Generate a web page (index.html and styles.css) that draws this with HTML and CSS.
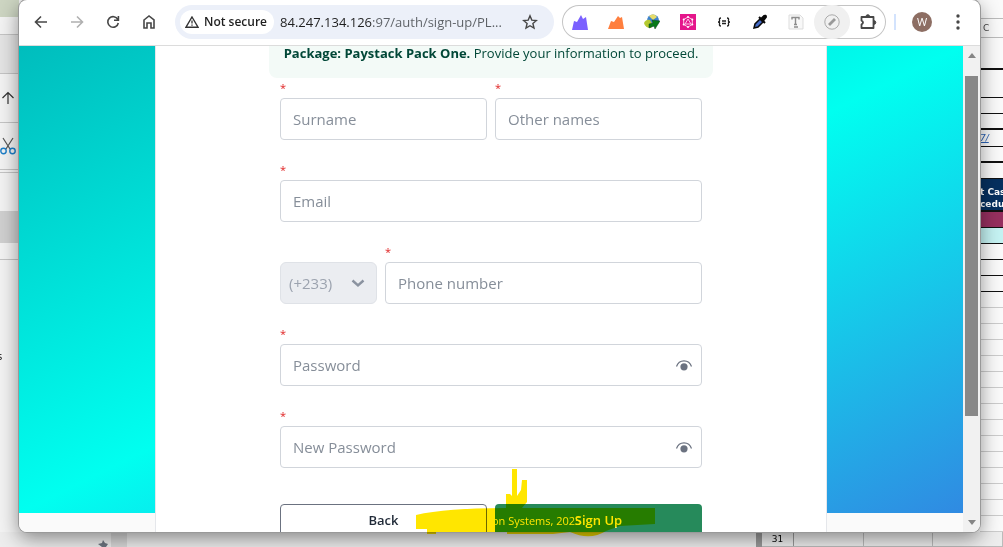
FILE: index.html
```html
<!DOCTYPE html>
<html lang="en">
<head>
<meta charset="utf-8">
<title>Sign up</title>
<link rel="stylesheet" href="styles.css">
</head>
<body>
<div class="desktop">
  <aside class="left-app">
    <div class="la la-photo"></div>
    <div class="la la-title"></div>
    <div class="la la-tab"></div>
    <div class="la la-tool"><svg width="14" height="14" viewBox="0 0 14 14"><path d="M7 13V1.500M1.500 7 7 1.500 12.500 7" fill="none" stroke="#333" stroke-width="1.200"/></svg></div>
    <div class="la la-cut"><svg width="16" height="18" viewBox="0 0 16 18"><path d="M3 1l7 11M13 1 6 12" fill="none" stroke="#555" stroke-width="1.200"/><circle cx="3.500" cy="14" r="2.700" fill="none" stroke="#1e7fc8" stroke-width="1.400"/><circle cx="12.500" cy="14" r="2.700" fill="none" stroke="#1e7fc8" stroke-width="1.400"/></svg></div>
    <div class="la la-line"></div>
    <div class="la la-space"></div>
    <div class="la la-selected"></div>
    <div class="la la-gap"></div>
    <div class="la la-text">s</div>
  </aside>

  <main class="window">
    <header class="toolbar">
      <nav class="nav">
        <button class="tool" aria-label="Back"><svg width="14" height="14" viewBox="0 0 14 14"><path d="M13 7H1.500M7 1.500 1.500 7 7 12.500" fill="none" stroke="#474747" stroke-width="1.600"/></svg></button>
        <button class="tool" aria-label="Forward" disabled><svg width="14" height="14" viewBox="0 0 14 14"><path d="M1 7h11.500M7 1.500 12.500 7 7 12.500" fill="none" stroke="#b0b0b0" stroke-width="1.600"/></svg></button>
        <button class="tool" aria-label="Reload"><svg width="14" height="14" viewBox="0 0 14 14"><path d="M11.800 4.500A5.300 5.300 0 1 0 12.300 8M12.400 1v4.300H8" fill="none" stroke="#474747" stroke-width="1.600"/></svg></button>
        <button class="tool" aria-label="Home"><svg width="14" height="16" viewBox="0 0 14 16"><path d="M2 6 7 2l5 4v8H9V9H5v5H2z" fill="none" stroke="#474747" stroke-width="1.600"/></svg></button>
      </nav>
      <div class="omnibox">
        <button class="secure"><svg width="14" height="12" viewBox="0 0 14 12"><path d="M7 1 13 11.200H1z" fill="none" stroke="#333" stroke-width="1.400"/><path d="M7 4.500v3M7 8.500v1.200" stroke="#333" stroke-width="1.300"/></svg><span>Not secure</span></button>
        <input class="url" aria-label="Address" value="84.247.134.126:97/auth/sign-up/PL...">
        <button class="star" aria-label="Bookmark"><svg width="16" height="16" viewBox="0 0 16 16"><path d="m8 1.800 1.800 4.300 4.600.4-3.500 3 1.100 4.600L8 11.700l-4 2.400 1.100-4.600-3.500-3 4.600-.4z" fill="none" stroke="#474747" stroke-width="1.400"/></svg></button>
      </div>
      <div class="extensions">
        <button class="tool" aria-label="Purple extension"><svg width="16" height="16" viewBox="0 0 16 16"><path d="M0 16 2 7l3 1 4-7 2 4 3-2 2 13z" fill="#7b61ff"/></svg></button>
        <button class="tool" aria-label="Orange extension"><svg width="16" height="16" viewBox="0 0 16 16"><path d="M0 15 3 7l3 1 4-6 2 2 2-1 2 12z" fill="#ff7f3e"/></svg></button>
        <button class="tool" aria-label="Download manager"><svg width="16" height="16" viewBox="0 0 16 16"><circle cx="9" cy="6.500" r="6" fill="#3d82cf"/><path d="M5 2q5-4 8 1L9 6z" fill="#e6dc6a"/><path d="M0 9q2-4 6-3l3 5-2 3q-6 0-7-5" fill="#b4c92f"/><path d="m5 10 4-1-1-3 8 1-5 8-1-3-5 2z" fill="#087a18" stroke="#174722" stroke-width=".5"/></svg></button>
        <button class="tool" aria-label="GraphQL extension"><svg width="16" height="16" viewBox="0 0 16 16"><path fill="#e5168b" d="M0 0h16v16H0z"/><path d="m8 3 4.300 2.500v5L8 13l-4.300-2.500v-5zM8 5l3 5H5z" fill="none" stroke="#ffc1e5" stroke-width="1"/><g fill="#fff"><circle cx="8" cy="3" r="1"/><circle cx="12.300" cy="5.500" r="1"/><circle cx="12.300" cy="10.500" r="1"/><circle cx="8" cy="13" r="1"/><circle cx="3.700" cy="10.500" r="1"/><circle cx="3.700" cy="5.500" r="1"/></g></svg></button>
        <button class="tool" aria-label="JSON extension"><svg width="14" height="10" viewBox="0 0 14 10"><path d="M4 1Q2 1 2.500 3T1 5q2 0 1.500 2T4 9M10 1q2 0 1.500 2T13 5q-2 0-1.500 2T10 9M5 4h4M5 6.500h4" fill="none" stroke="#222" stroke-width="1.300"/></svg></button>
        <button class="tool" aria-label="Color picker"><svg width="16" height="16" viewBox="0 0 16 16"><path d="m2 14 1-4 5-5 3 3-5 5z" fill="#446bc8" stroke="#080808" stroke-width="1.500"/><path d="m7 3 6 6M9 5l3-3q2-1 2 1l-3 4z" fill="#080808" stroke="#080808" stroke-width="2"/></svg></button>
        <button class="tool" aria-label="Text extension"><svg width="16" height="16" viewBox="0 0 16 16"><path d="M1 1h11l3 3v11H1z" fill="#f8f8f8" stroke="#ddd"/><path d="M4 5.500V3.500h7v2M7.500 4v6.500M6 10.500h3M6 13h4" fill="none" stroke="#8c8c8c" stroke-width="1.400"/></svg></button>
        <button class="tool active" aria-label="Pen extension"><svg width="16" height="16" viewBox="0 0 16 16"><circle cx="8" cy="8" r="7.200" fill="none" stroke="#aaa" stroke-width="1"/><path d="m5 11 6-6" stroke="#999" stroke-width="2.800"/></svg></button>
        <button class="tool" aria-label="Extensions"><svg width="18" height="18" viewBox="0 0 18 18"><path d="M2.500 4h12v11h-12v-3.500q3-2 0-4z" fill="none" stroke="#474747" stroke-width="1.800" stroke-linejoin="round"/><path d="M7 3.500a1.800 1.800 0 0 1 3.600 0zM15 7.700a1.800 1.800 0 0 1 0 3.600z" fill="#474747" stroke="#474747"/></svg></button>
      </div>
      <span class="divider"></span>
      <div class="profile">
        <button class="tool" aria-label="Profile"><span class="avatar">W</span></button>
        <button class="tool" aria-label="Menu"><svg width="4" height="16" viewBox="0 0 4 16"><g fill="#474747"><circle cx="2" cy="2" r="1.700"/><circle cx="2" cy="8" r="1.700"/><circle cx="2" cy="14" r="1.700"/></g></svg></button>
      </div>
    </header>

    <div class="viewport">
      <div class="page">
        <section class="card">
          <p class="banner"><strong>Package: Paystack Pack One.</strong> Provide your information to proceed.</p>
          <form class="form">
            <div class="row halves">
              <div class="field"><label for="surname">*</label><input class="box" id="surname" placeholder="Surname"></div>
              <div class="field"><label for="other">*</label><input class="box" id="other" placeholder="Other names"></div>
            </div>
            <div class="field"><label for="email">*</label><input class="box" id="email" type="email" placeholder="Email"></div>
            <div class="row phone">
              <div class="code">
                <select class="box" aria-label="Country code" disabled><option>(+233)</option></select>
                <svg class="chevron" width="14" height="10" viewBox="0 0 14 10"><path d="m1.500 1.500 5.500 5 5.500-5" fill="none" stroke="#8b93a0" stroke-width="2.400"/></svg>
              </div>
              <div class="field"><label for="tel">*</label><input class="box" id="tel" type="tel" placeholder="Phone number"></div>
            </div>
            <div class="field"><label for="pass">*</label>
              <div class="box secret"><input id="pass" type="password" placeholder="Password"><button type="button" aria-label="Show password"><svg width="18" height="14" viewBox="0 0 18 14"><path d="M1.500 8.500C4 1 14 1 16.500 8.500" fill="none" stroke="#6b7280" stroke-width="1.200"/><circle cx="9" cy="8.800" r="3.600" fill="#6b7280"/></svg></button></div></div>
            <div class="field"><label for="newpass">*</label>
              <div class="box secret"><input id="newpass" type="password" placeholder="New Password"><button type="button" aria-label="Show new password"><svg width="18" height="14" viewBox="0 0 18 14"><path d="M1.500 8.500C4 1 14 1 16.500 8.500" fill="none" stroke="#6b7280" stroke-width="1.200"/><circle cx="9" cy="8.800" r="3.600" fill="#6b7280"/></svg></button></div></div>
            <div class="row halves actions">
              <button class="btn back" type="button">Back</button>
              <button class="btn submit" type="submit">Sign Up</button>
              <span class="copyright">on Systems, 2025</span>
            </div>
          </form>
        </section>
      </div>
      <div class="scrollbar"><i class="up"></i><i class="thumb"></i><i class="down"></i></div>
    </div>
  </main>

  <aside class="sheet">
    <div class="s s-top"></div>
    <div class="s s-head">C</div>
    <div class="s s-a"></div>
    <div class="s s-b thin"></div>
    <div class="s thin"></div>
    <div class="s"></div>
    <div class="s s-link thin"><a href="#">7/</a></div>
    <div class="s"></div>
    <div class="s thin"></div>
    <div class="s s-title">t Cas<br>cedu</div>
    <div class="s s-maroon thin"></div>
    <div class="s s-cyan thin"></div>
    <div class="s thin"></div><div class="s thin"></div><div class="s thin"></div>
    <div class="s-rest"></div>
  </aside>

  <footer class="under">
    <div class="under-left"><svg width="12" height="8" viewBox="0 0 12 8"><path d="m1 5 4-1 1-3 2 3 3 1-2 3H5z" fill="#6d7580"/></svg><span class="block"></span></div>
    <div class="under-sheet"><b>31</b><i></i><i></i><i></i></div>
  </footer>

  <svg class="marker" width="240" height="68" viewBox="0 0 240 68"><path d="M0 46Q30 39 90 39V25h4l2 2V0h5v27l4-6 1-10h5v22l-5 6h133v16l-35 2-14 5q-16 10-36 1l-17 2H91v-2H20v2h-9v-5H0z" fill="#ffe600"/></svg>
</div>
</body>
</html>
```
FILE: styles.css
```css
* { box-sizing: border-box; }
body { margin: 0; font-family: "Open Sans", "Noto Sans", sans-serif; }
button, input, select { font: inherit; margin: 0; }
button { border: 0; padding: 0; background: none; }
svg { display: block; flex: none; }

.desktop {
  position: relative;
  display: grid;
  grid-template-columns: 19px minmax(0, 1fr) 23px;
  grid-template-rows: minmax(0, 1fr) 15px;
  height: 100vh;
  overflow: hidden;
  background: #f3f3f3;
}

/* windows behind the browser */
.left-app { overflow: hidden; }
.la { display: flex; align-items: center; justify-content: center; padding-right: 3px; border-bottom: 1px solid #c4c4c4; }
.la-photo { height: 17px; background: #cdd5c2; border: 0; }
.la-title { height: 18px; }
.la-tab { height: 39px; background: #e4e4e4; }
.la-tool { height: 49px; }
.la-cut { height: 47px; }
.la-line { height: 3px; }
.la-space { height: 38px; border: 0; }
.la-selected { height: 32px; background: #d0d0d0; border: 0; }
.la-gap { height: 17px; }
.la-text { height: 190px; border: 0; font-size: 11px; justify-content: flex-start; margin-left: -3px; }

.sheet { overflow: hidden; font-family: "DejaVu Sans", sans-serif; background: #fafafa; }
.s { height: 16px; border-bottom: 2px solid #111; }
.s.thin { border-bottom-width: 1px; }
.s-top { height: 19px; border-bottom: 1px solid #bbb; }
.s-head { height: 19px; border-bottom: 1px solid #bbb; font-size: 9px; line-height: 19px; padding-left: 3px; color: #444; }
.s-a { height: 32px; }
.s-b { height: 28px; }
.s-link { height: 17px; }
.s a { display: block; font-size: 9px; font-style: italic; line-height: 16px; color: #2a62b5; }
.s-title { height: 33px; background: #06305f; color: #fff; font-size: 9px; font-weight: bold; line-height: 12px; padding-top: 7px; white-space: nowrap; }
.s-maroon { background: #96305f; }
.s-cyan { background: #c5f3f3; }
.s-rest { height: 100%; background: repeating-linear-gradient(#fafafa 0 15px, #ccc 15px 16px); }

.under { grid-column: 1 / -1; display: flex; background: #ededed; }
.under-left { flex: 1; display: flex; align-items: flex-end; padding-left: 97px; gap: 2px; border-right: 6px solid #999; }
.under-left .block { width: 16px; height: 15px; background: #d8d8d8; }
.under-sheet { display: flex; width: 241px; border-bottom: 1px solid #bbb; }
.under-sheet b { width: 35px; border-right: 1px solid #999; font: 9px/15px "DejaVu Sans", sans-serif; text-align: center; }
.under-sheet i { width: 76px; border-right: 1px solid #bbb; }

/* browser */
.window {
  position: relative;
  z-index: 1;
  display: flex;
  flex-direction: column;
  overflow: hidden;
  border-radius: 8px;
  background: #fff;
  box-shadow: 0 0 0 1px #999, 0 6px 20px rgba(0, 0, 0, .45);
}
.toolbar { display: flex; align-items: center; gap: 8px; height: 46px; flex: none; padding: 0 4px 2px; border-bottom: 1px solid #dcdcdc; }
.nav, .profile { display: flex; }
.tool { display: flex; align-items: center; justify-content: center; width: 36px; height: 34px; flex: none; }
.omnibox { flex: 1; min-width: 0; display: flex; align-items: center; height: 34px; padding: 0 16px 0 5px; border-radius: 17px; background: #ecf0f9; }
.secure { display: flex; align-items: center; gap: 5px; height: 24px; flex: none; padding: 0 7px 0 5px; border-radius: 12px; background: #fff; font-size: 12px; font-weight: 600; color: #1f1f1f; }
.url {
  flex: 1; min-width: 0; height: 24px; margin-left: 6px; padding: 0; border: 0; outline: 0;
  font-size: 13px; color: transparent;
  background: linear-gradient(90deg, #1f1f1f 92px, #5b5f64 92px);
  background-clip: text; -webkit-background-clip: text;
}
.star { flex: none; }
.extensions { display: flex; border-radius: 17px; box-shadow: inset 0 0 0 1px #c4c4c4; }
.active { border-radius: 17px; background: #f0f0f0; }
.divider { width: 2px; height: 16px; background: #d3e3fd; }
.avatar { display: flex; align-items: center; justify-content: center; width: 20px; height: 20px; border-radius: 50%; background: #8d6e63; color: #fff; font-size: 11px; }

.viewport { flex: 1; min-height: 0; display: flex; }
.page {
  flex: 1; min-width: 0; overflow: hidden;
  display: flex; justify-content: center;
  background: linear-gradient(to bottom right, #00bdbd, #00fff0 50%, #308ae2) 0 0 / 100% calc(100% - 19px) no-repeat #fafafa;
}
.card { width: 100%; max-width: 672px; height: max-content; background: #fff; border: 1px solid #e5e7eb; border-width: 0 1px; }
.banner { width: 444px; max-width: 100%; margin: 0 auto; height: 32px; border-radius: 0 0 8px 8px; background: #f3faf7; color: #014737; font-size: 13px; line-height: 14px; text-align: center; white-space: nowrap; }
.banner strong { font-weight: 700; }
.form { display: flex; flex-direction: column; gap: 20px; width: 422px; max-width: 100%; margin: 0 auto; }
.row { display: grid; gap: 8px; align-items: end; }
.halves { grid-template-columns: 1fr 1fr; }
.phone { grid-template-columns: 97px 1fr; }
.field { min-width: 0; }
.field label { display: block; height: 20px; font-size: 11px; line-height: 20px; color: #e02424; }
.box { display: block; width: 100%; height: 42px; padding: 0 12px; border: 1px solid #d1d5db; border-radius: 4px; background: #fff; font-size: 15px; color: #374151; outline: 0; }
::placeholder { color: #868e99; opacity: 1; }
.code { position: relative; }
.code .box { appearance: none; padding: 0 8px; background: #ebedf1; border-color: #dfe2e7; border-radius: 6px; color: #9ca3af; opacity: 1; }
.chevron { position: absolute; right: 12px; top: 17px; }
.secret { display: flex; align-items: center; padding-right: 8px; }
.secret input { flex: 1; min-width: 0; border: 0; padding: 0; outline: 0; background: none; }
.actions { position: relative; margin-top: 16px; }
.btn { height: 42px; padding-bottom: 11px; border-radius: 4px; font-size: 13px; font-weight: 600; }
.back { border: 1px solid #6b7280; background: #fff; color: #1f2937; }
.submit { background: #268a5b; color: #fff; }
.copyright { position: absolute; left: 212px; top: 8px; font-size: 11px; line-height: 18px; color: #fff; white-space: nowrap; }

.scrollbar { width: 17px; flex: none; display: flex; flex-direction: column; align-items: center; padding: 7px 0; background: #f1f1f1; }
.up, .down { border: 4px solid transparent; }
.up { border-top: 0; border-bottom: 5px solid #858585; }
.down { border-bottom: 0; border-top: 5px solid #858585; margin-top: auto; }
.thumb { width: 13px; height: 72%; margin-top: 18px; background: #888; }

/* highlighter stroke over the footer area */
.marker { position: absolute; z-index: 2; left: 416px; top: 469px; mix-blend-mode: multiply; }
```
